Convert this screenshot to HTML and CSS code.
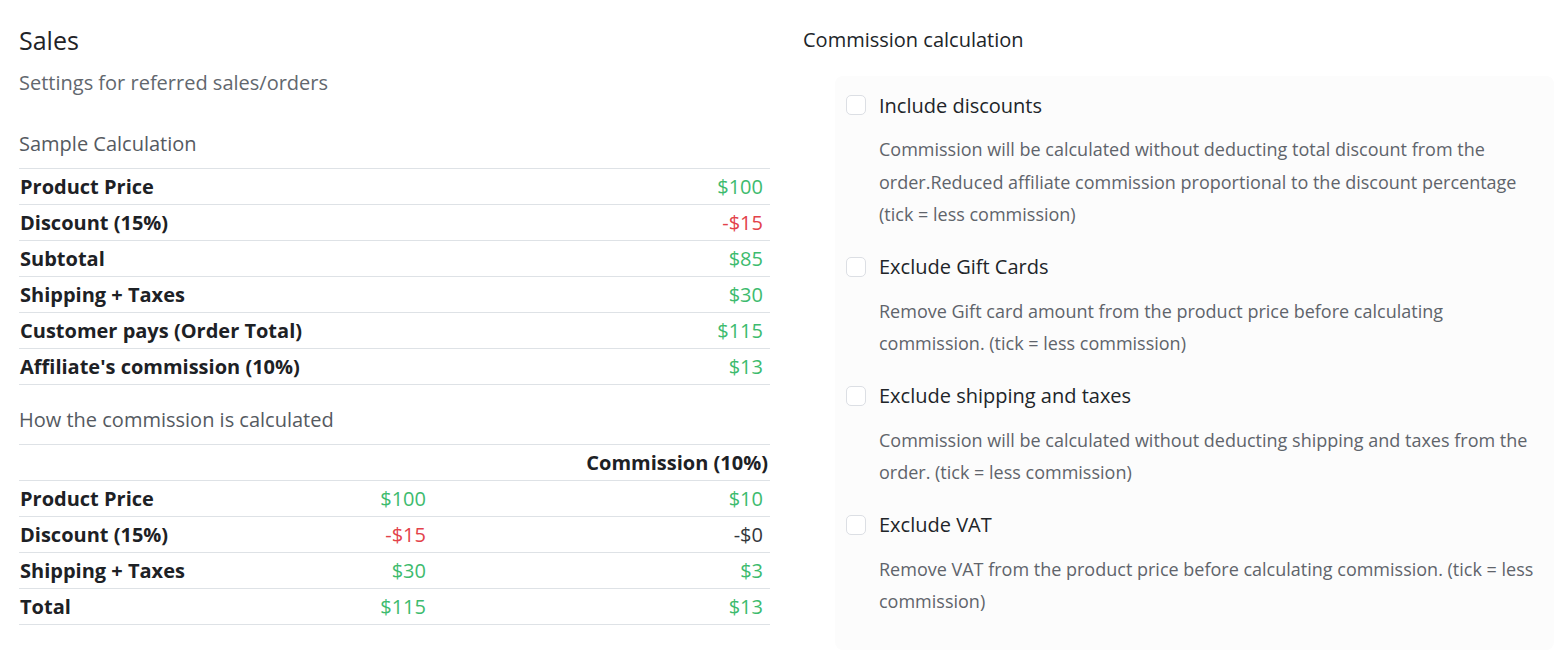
FILE: index.html
```html
<!DOCTYPE html>
<html lang="en">
<head>
<meta charset="utf-8">
<title>Sales settings</title>
<link rel="stylesheet" href="styles.css">
</head>
<body>
<div class="page">
  <section class="left">
    <h1 class="title">Sales</h1>
    <p class="subtitle">Settings for referred sales/orders</p>

    <h2 class="section-title">Sample Calculation</h2>
    <table class="calc">
      <tr><th>Product Price</th><td class="green">$100</td></tr>
      <tr><th>Discount (15%)</th><td class="red">-$15</td></tr>
      <tr><th>Subtotal</th><td class="green">$85</td></tr>
      <tr><th>Shipping + Taxes</th><td class="green">$30</td></tr>
      <tr><th>Customer pays (Order Total)</th><td class="green">$115</td></tr>
      <tr><th>Affiliate's commission (10%)</th><td class="green">$13</td></tr>
    </table>

    <h2 class="section-title second">How the commission is calculated</h2>
    <table class="calc three">
      <tr><th></th><td class="mid"></td><th class="head-right">Commission (10%)</th></tr>
      <tr><th>Product Price</th><td class="mid green">$100</td><td class="green">$10</td></tr>
      <tr><th>Discount (15%)</th><td class="mid red">-$15</td><td class="dark">-$0</td></tr>
      <tr><th>Shipping + Taxes</th><td class="mid green">$30</td><td class="green">$3</td></tr>
      <tr><th>Total</th><td class="mid green">$115</td><td class="green">$13</td></tr>
    </table>
  </section>

  <section class="right">
    <h2 class="right-title">Commission calculation</h2>
    <div class="panel">
      <div class="option">
        <label class="check"><span class="box"></span><span class="label">Include discounts</span></label>
        <p class="desc">Commission will be calculated without deducting total discount from the<br>order.Reduced affiliate commission proportional to the discount percentage<br>(tick = less commission)</p>
      </div>
      <div class="option">
        <label class="check"><span class="box"></span><span class="label">Exclude Gift Cards</span></label>
        <p class="desc">Remove Gift card amount from the product price before calculating<br>commission. (tick = less commission)</p>
      </div>
      <div class="option">
        <label class="check"><span class="box"></span><span class="label">Exclude shipping and taxes</span></label>
        <p class="desc">Commission will be calculated without deducting shipping and taxes from the<br>order. (tick = less commission)</p>
      </div>
      <div class="option">
        <label class="check"><span class="box"></span><span class="label">Exclude VAT</span></label>
        <p class="desc">Remove VAT from the product price before calculating commission. (tick = less<br>commission)</p>
      </div>
    </div>
  </section>
</div>
</body>
</html>
```

FILE: styles.css
```css
* { box-sizing: border-box; }

body {
  margin: 0;
  background: #ffffff;
  font-family: "Open Sans", "Noto Sans", "Liberation Sans", sans-serif;
  color: #212529;
}

.page {
  display: grid;
  grid-template-columns: 751px 751px;
  column-gap: 33px;
  padding-left: 19px;
}

.title {
  margin: 25px 0 0;
  font-size: 25px;
  line-height: 30px;
  font-weight: 400;
  color: #1f2327;
}

.subtitle {
  margin: 15px 0 0;
  font-size: 20px;
  line-height: 26px;
  color: #62676e;
}

.section-title {
  margin: 35px 0 0;
  font-size: 20px;
  line-height: 26px;
  font-weight: 400;
  color: #555a61;
}

.section-title.second {
  margin-top: 22px;
}

.calc {
  width: 751px;
  margin-top: 11px;
  border-collapse: collapse;
  font-size: 20px;
}

.calc tr {
  height: 36px;
  border-top: 1px solid #dee2e6;
  border-bottom: 1px solid #dee2e6;
}

.calc th {
  text-align: left;
  font-weight: 700;
  padding: 0 0 0 1px;
  color: #1d2125;
  white-space: nowrap;
}

.calc td {
  text-align: right;
  padding: 0 7px 0 0;
}

.calc.three th:first-child { width: 300px; }
.calc.three .mid { width: 110px; padding-right: 3px; }
.calc.three .head-right { text-align: right; padding-right: 2px; }

.green { color: #3dbb6e; }
.red { color: #e3424a; }
.dark { color: #33373c; }

.right-title {
  margin: 27px 0 0;
  font-size: 20px;
  line-height: 26px;
  font-weight: 400;
  color: #212529;
}

.panel {
  margin: 23px 0 4px 32px;
  background: #fcfcfc;
  border-radius: 8px;
  padding: 14px 10px 32px 11px;
}

.option + .option {
  margin-top: 21px;
}

.check {
  display: flex;
  align-items: center;
  gap: 13px;
  height: 30px;
}

.box {
  width: 20px;
  height: 20px;
  flex: none;
  border: 1px solid #dcdfe4;
  border-radius: 5px;
  background: #ffffff;
}

.label {
  font-size: 20px;
  color: #212529;
}

.desc {
  margin: 13px 0 0 33px;
  font-size: 18px;
  line-height: 32.5px;
  color: #5f646b;
  white-space: nowrap;
}
```
